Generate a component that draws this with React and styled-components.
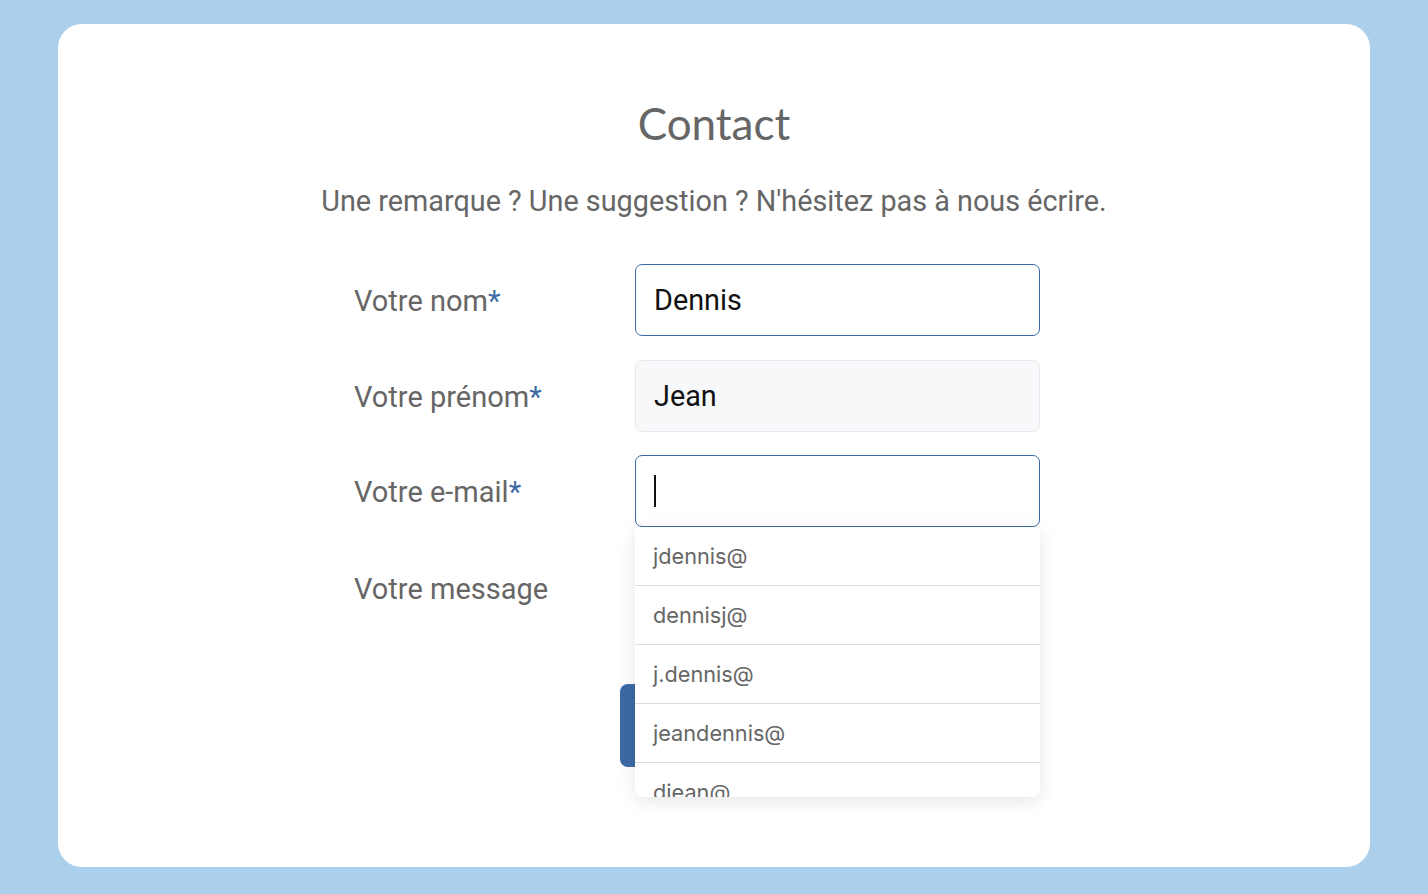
import styled, { createGlobalStyle } from "styled-components"

const GlobalStyle = createGlobalStyle`
  html, body {
    margin: 0;
    padding: 0;
    background: #acd0ec;
  }
  * { box-sizing: border-box; }
`

const suggestions = ["jdennis@", "dennisj@", "j.dennis@", "jeandennis@", "djean@"]

function App() {
  return (
    <>
      <GlobalStyle />
      <Page>
        <Card>
          <Title>Contact</Title>
          <Intro>Une remarque ? Une suggestion ? N'hésitez pas à nous écrire.</Intro>
          <Form>
            <Label>Votre nom<Star>*</Star></Label>
            <Field $focused>Dennis</Field>
            <Spacer />

            <Label>Votre prénom<Star>*</Star></Label>
            <Field $filled>Jean</Field>
            <Spacer />

            <Label>Votre e-mail<Star>*</Star></Label>
            <EmailCell>
              <Field $focused><Caret /></Field>
              <Suggestions>
                {suggestions.map(s => (
                  <Suggestion key={s}>{s}</Suggestion>
                ))}
              </Suggestions>
            </EmailCell>
            <Spacer />

            <Label $top>Votre message</Label>
            <MessageArea />
            <Spacer />

            <ButtonRow>
              <SendButton>Envoyer</SendButton>
            </ButtonRow>
          </Form>
        </Card>
      </Page>
    </>
  )
}

export default App

const Page = styled.div`
  min-height: 894px;
  padding: 24px 58px 27px;
`

const Card = styled.div`
  background: #fff;
  border-radius: 24px;
  height: 843px;
  padding-top: 69px;
  overflow: hidden;
`

const Title = styled.h1`
  margin: 0;
  text-align: center;
  font-family: Lato, "Open Sans", sans-serif;
  font-weight: 400;
  font-size: 44px;
  line-height: 60px;
  color: #666;
`

const Intro = styled.p`
  margin: 28px 0 0;
  text-align: center;
  font-family: Roboto, "Liberation Sans", sans-serif;
  font-size: 28.8px;
  line-height: 40px;
  color: #666;
`

const Form = styled.div`
  width: 720px;
  margin: 43px auto 0;
  display: grid;
  grid-template-columns: 281px 405px 1fr;
  row-gap: 23.5px;
  align-items: center;
`

const Spacer = styled.div``

const Label = styled.label`
  font-family: Roboto, "Liberation Sans", sans-serif;
  font-size: 29px;
  line-height: 36px;
  color: #666;
  padding-top: ${p => (p.$top ? "20px" : "2px")};
  align-self: ${p => (p.$top ? "start" : "center")};
`

const Star = styled.span`
  color: #3d6aa4;
`

const Field = styled.div`
  height: 72px;
  display: flex;
  align-items: center;
  padding: 0 18px;
  border-radius: 7px;
  border: 1px solid ${p => (p.$focused ? "#3d6aa4" : "#e6e8eb")};
  background: ${p => (p.$filled ? "#f7f8fa" : "#fff")};
  font-family: Roboto, "Liberation Sans", sans-serif;
  font-size: 28.8px;
  color: #111;
`

const Caret = styled.span`
  display: block;
  width: 2px;
  height: 32px;
  background: #111;
`

const EmailCell = styled.div`
  position: relative;
`

const Suggestions = styled.ul`
  position: absolute;
  top: 72px;
  left: 0;
  right: 0;
  height: 270px;
  margin: 0;
  padding: 0;
  list-style: none;
  background: #fff;
  border-radius: 0 0 8px 8px;
  box-shadow: 0 4px 18px rgba(0, 0, 0, 0.1);
  overflow: hidden;
  z-index: 2;
`

const Suggestion = styled.li`
  height: 59px;
  display: flex;
  align-items: center;
  padding: 0 18px;
  border-bottom: 1px solid #dcdcdc;
  font-family: Inter, "Open Sans", sans-serif;
  font-size: 21.7px;
  color: #666;
`

const MessageArea = styled.div`
  height: 110px;
  border: 1px solid #e6e8eb;
  border-radius: 7px;
  background: #f7f8fa;
  align-self: start;
`

const ButtonRow = styled.div`
  grid-column: 1 / -1;
  display: flex;
  justify-content: center;
`

const SendButton = styled.button`
  width: 188px;
  height: 83px;
  border: none;
  border-radius: 8px;
  background: #3d6aa4;
  color: #fff;
  font-family: Roboto, "Liberation Sans", sans-serif;
  font-size: 24px;
`
